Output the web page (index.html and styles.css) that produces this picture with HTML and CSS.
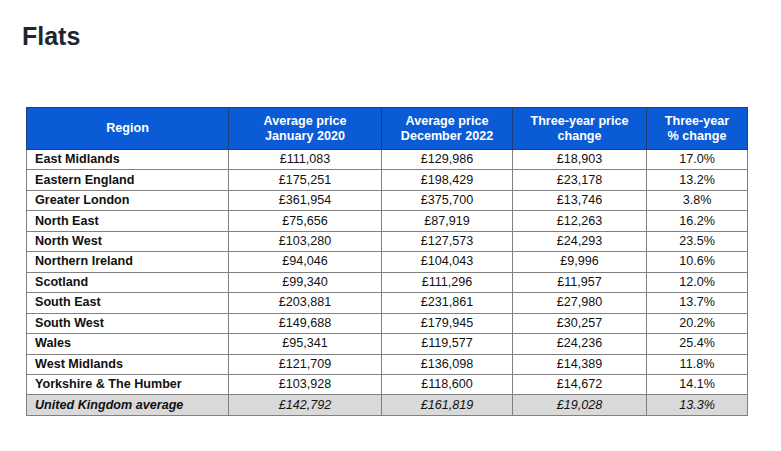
FILE: index.html
```html
<!DOCTYPE html>
<html lang="en">
<head>
<meta charset="utf-8">
<title>Flats</title>
<link rel="stylesheet" href="styles.css">
</head>
<body>
<h1 class="title">Flats</h1>
<table class="prices">
  <colgroup>
    <col class="c1"><col class="c2"><col class="c3"><col class="c4"><col class="c5">
  </colgroup>
  <thead>
    <tr>
      <th>Region</th>
      <th>Average price<br>January 2020</th>
      <th>Average price<br>December 2022</th>
      <th>Three-year price<br>change</th>
      <th>Three-year<br>% change</th>
    </tr>
  </thead>
  <tbody>
    <tr><td>East Midlands</td><td>£111,083</td><td>£129,986</td><td>£18,903</td><td>17.0%</td></tr>
    <tr><td>Eastern England</td><td>£175,251</td><td>£198,429</td><td>£23,178</td><td>13.2%</td></tr>
    <tr><td>Greater London</td><td>£361,954</td><td>£375,700</td><td>£13,746</td><td>3.8%</td></tr>
    <tr><td>North East</td><td>£75,656</td><td>£87,919</td><td>£12,263</td><td>16.2%</td></tr>
    <tr><td>North West</td><td>£103,280</td><td>£127,573</td><td>£24,293</td><td>23.5%</td></tr>
    <tr><td>Northern Ireland</td><td>£94,046</td><td>£104,043</td><td>£9,996</td><td>10.6%</td></tr>
    <tr><td>Scotland</td><td>£99,340</td><td>£111,296</td><td>£11,957</td><td>12.0%</td></tr>
    <tr><td>South East</td><td>£203,881</td><td>£231,861</td><td>£27,980</td><td>13.7%</td></tr>
    <tr><td>South West</td><td>£149,688</td><td>£179,945</td><td>£30,257</td><td>20.2%</td></tr>
    <tr><td>Wales</td><td>£95,341</td><td>£119,577</td><td>£24,236</td><td>25.4%</td></tr>
    <tr><td>West Midlands</td><td>£121,709</td><td>£136,098</td><td>£14,389</td><td>11.8%</td></tr>
    <tr><td>Yorkshire &amp; The Humber</td><td>£103,928</td><td>£118,600</td><td>£14,672</td><td>14.1%</td></tr>
    <tr class="total"><td>United Kingdom average</td><td>£142,792</td><td>£161,819</td><td>£19,028</td><td>13.3%</td></tr>
  </tbody>
</table>
</body>
</html>
```
FILE: styles.css
```css
html, body {
  margin: 0;
  padding: 0;
  background: #ffffff;
}
body {
  font-family: "Liberation Sans", Arial, sans-serif;
  padding: 22px 0 0 26px;
}
.title {
  margin: 0 0 0 -4px;
  font-size: 25px;
  line-height: 29px;
  font-weight: 700;
  color: #1d2731;
}
.prices {
  margin-top: 56px;
  border-collapse: collapse;
  width: 721px;
  table-layout: fixed;
  font-size: 12.6px;
  color: #111111;
  border: 1px solid #6e6e6e;
}
.c1 { width: 202px; }
.c2 { width: 153px; }
.c3 { width: 131px; }
.c4 { width: 134px; }
.c5 { width: 101px; }
.prices th {
  background: #0a5bd5;
  color: #ffffff;
  font-weight: 700;
  font-size: 12.6px;
  line-height: 15px;
  height: 41px;
  padding: 0 4px;
  border: 1px solid #1f3f7a;
  text-align: center;
  vertical-align: middle;
}
.prices td {
  height: 19.46px;
  padding: 0 8px;
  border: 1px solid #808080;
  text-align: center;
  line-height: 15px;
  vertical-align: middle;
}
.prices td:first-child {
  text-align: left;
  font-weight: 700;
}
.prices .total td {
  background: #d9d9d9;
  font-style: italic;
}
```
